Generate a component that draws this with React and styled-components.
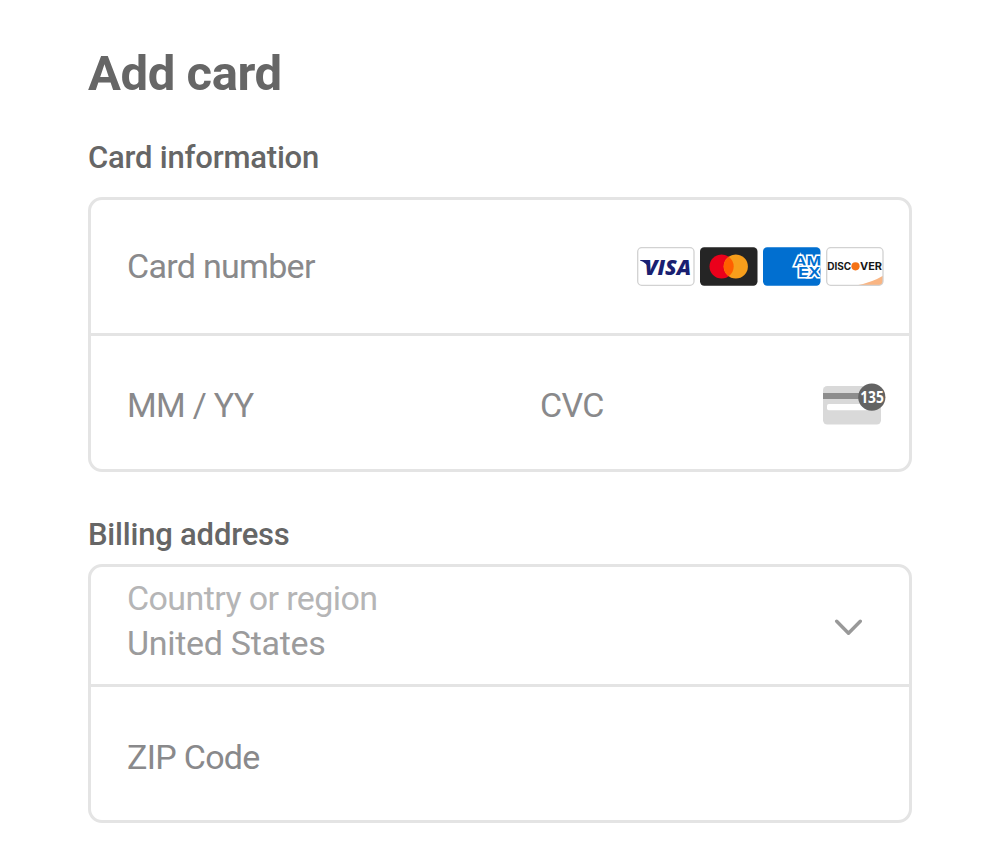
import React from "react";
import styled, { createGlobalStyle } from "styled-components";

const GlobalStyle = createGlobalStyle`
  *, *::before, *::after { box-sizing: border-box; }
  body { margin: 0; background: #fff; font-family: Roboto, "Liberation Sans", sans-serif; }
`;

const Page = styled.main`
  width: 1000px;
  height: 862px;
  padding: 45px 88px 0;
  overflow: hidden;
`;

const Title = styled.h1`
  margin: 0;
  height: 58px;
  font-size: 49px;
  line-height: 58px;
  font-weight: 700;
  letter-spacing: -0.42px;
  color: #666;
  white-space: nowrap;
`;

const SectionLabel = styled.h2`
  margin: ${(p) => p.$top}px 0 ${(p) => p.$bottom}px;
  height: 38px;
  font-size: 31px;
  line-height: 38px;
  font-weight: 500;
  letter-spacing: -0.2px;
  color: #666;
  white-space: nowrap;
`;

const FieldGroup = styled.section`
  width: 824px;
  border: 3px solid #e4e4e4;
  border-radius: 14px;
`;

const Row = styled.div`
  display: flex;
  align-items: center;
  height: ${(p) => p.$height || 133}px;
  padding: 0 ${(p) => p.$right || 25}px 0 36px;

  & + & {
    height: 136px;
    border-top: 3px solid #e4e4e4;
  }
`;

const Field = styled.div`
  flex: ${(p) => (p.$width ? `0 0 ${p.$width}px` : "1")};
  padding-top: ${(p) => p.$drop || 0}px;
  font-size: 34px;
  line-height: 45px;
  letter-spacing: -0.7px;
  color: #89898b;
  white-space: nowrap;
`;

const SelectText = styled.div`
  flex: 1;
  font-size: 34px;
  line-height: 45px;
  padding-bottom: 9px;
  white-space: nowrap;
`;

const SelectLabel = styled.div`
  color: #b5b5b6;
  letter-spacing: -0.6px;
`;

const SelectValue = styled.div`
  color: #9b9b9c;
  letter-spacing: -0.3px;
`;

const Brands = styled.div`
  display: flex;
  gap: 5px;
`;

const Icon = styled.svg`
  display: block;
  flex: none;
`;

const IconBox = styled.span`
  padding: ${(p) => p.$top}px ${(p) => p.$right || 0}px 0 0;
`;

const Visa = () => (
  <Icon width="58" height="39" viewBox="0 0 58 39">
    <rect x="0.7" y="0.7" width="56.3" height="37.6" rx="4" fill="#fff" stroke="#d2d2d2" strokeWidth="1.3" />
    <path d="M3 13H9.3Q10.7 13 11 14.3L12.6 21.5Q9.5 15.7 3 13.4Z" fill="#1a1f71" />
    <text x="7.4" y="27.7" textLength="46.8" lengthAdjust="spacingAndGlyphs" fill="#1a1f71" fontFamily='"Open Sans", sans-serif' fontSize="20.8" fontWeight="800" fontStyle="italic">VISA</text>
  </Icon>
);

const Mastercard = () => (
  <Icon width="58" height="39" viewBox="0 0 58 39">
    <rect x="0" y="0.3" width="57.5" height="38.5" rx="4.2" fill="#252525" />
    <circle cx="21.6" cy="19.5" r="12.1" fill="#eb001b" />
    <circle cx="35.8" cy="19.5" r="12.1" fill="#f79e1b" />
    <path d="M28.7 9.7A12.1 12.1 0 0 1 28.7 29.3A12.1 12.1 0 0 1 28.7 9.7Z" fill="#ff5f00" />
  </Icon>
);

const Amex = () => (
  <Icon width="58" height="39" viewBox="0 0 58 39">
    <defs>
      <clipPath id="amex-card">
        <rect x="0" y="0.3" width="57.5" height="38.5" rx="4.2" />
      </clipPath>
    </defs>
    <rect x="0" y="0.3" width="57.5" height="38.5" rx="4.2" fill="#016fd0" />
    <g clipPath="url(#amex-card)">
      <text
        transform="scale(1.2 1)"
        fill="#016fd0"
        stroke="#fff"
        strokeWidth="3"
        strokeLinejoin="miter"
        paintOrder="stroke"
        fontFamily='"Liberation Sans", sans-serif'
        fontSize="14.6"
        fontWeight="700"
      >
        <tspan x="25.9 36.3" y="18.6">AM</tspan>
        <tspan x="29.2 37.9" y="30.4">EX</tspan>
      </text>
    </g>
  </Icon>
);

const Discover = () => (
  <Icon width="58" height="39" viewBox="0 0 58 39">
    <path d="M31 38.3Q46 35.5 57 28.8V34.5Q57 38.3 53 38.3Z" fill="#f9b583" />
    <rect x="0.7" y="0.7" width="56.3" height="37.6" rx="4" fill="none" stroke="#d2d2d2" strokeWidth="1.3" />
    <g fill="#171717" fontFamily="Inter, sans-serif" fontSize="9.8" fontWeight="700">
      <text x="1.2" y="22.9" textLength="24" lengthAdjust="spacingAndGlyphs">DISC</text>
      <text x="34" y="22.9" textLength="22" lengthAdjust="spacingAndGlyphs">VER</text>
    </g>
    <circle cx="29.5" cy="19.3" r="4.1" fill="#f47216" />
  </Icon>
);

const SecurityCode = () => (
  <Icon width="63" height="42" viewBox="0 0 63 42">
    <rect x="0" y="3" width="58" height="38.5" rx="4.2" fill="#d9d9d9" />
    <rect x="0" y="10" width="58" height="6" fill="#8d8d8d" />
    <rect x="4" y="21" width="41" height="6.2" rx="1.8" fill="#fff" />
    <circle cx="48.8" cy="14.2" r="13.6" fill="#636363" />
    <text x="37.2" y="19.8" textLength="23.6" lengthAdjust="spacingAndGlyphs" fill="#fff" fontFamily='"Open Sans", sans-serif' fontSize="15.8" fontWeight="700">135</text>
  </Icon>
);

const Chevron = () => (
  <Icon width="28" height="17" viewBox="0 0 28 17">
    <path d="M2.7 2.2L14.5 14.2L26.3 2.2" fill="none" stroke="#999" strokeWidth="3.4" strokeLinecap="round" strokeLinejoin="round" />
  </Icon>
);

export default function App() {
  return (
    <>
      <GlobalStyle />
      <Page>
        <Title>Add card</Title>
        <SectionLabel $top={36} $bottom={20}>Card information</SectionLabel>
        <FieldGroup>
          <Row>
            <Field>Card number</Field>
            <Brands>
              <Visa />
              <Mastercard />
              <Amex />
              <Discover />
            </Brands>
          </Row>
          <Row $right={23}>
            <Field $width={413} $drop={6}>MM / YY</Field>
            <Field $drop={6}>CVC</Field>
            <IconBox $top={2}>
              <SecurityCode />
            </IconBox>
          </Row>
        </FieldGroup>
        <SectionLabel $top={44} $bottom={10}>Billing address</SectionLabel>
        <FieldGroup>
          <Row $height={117}>
            <SelectText>
              <SelectLabel>Country or region</SelectLabel>
              <SelectValue>United States</SelectValue>
            </SelectText>
            <IconBox $top={3} $right={22}>
              <Chevron />
            </IconBox>
          </Row>
          <Row>
            <Field $drop={7}>ZIP Code</Field>
          </Row>
        </FieldGroup>
      </Page>
    </>
  );
}
